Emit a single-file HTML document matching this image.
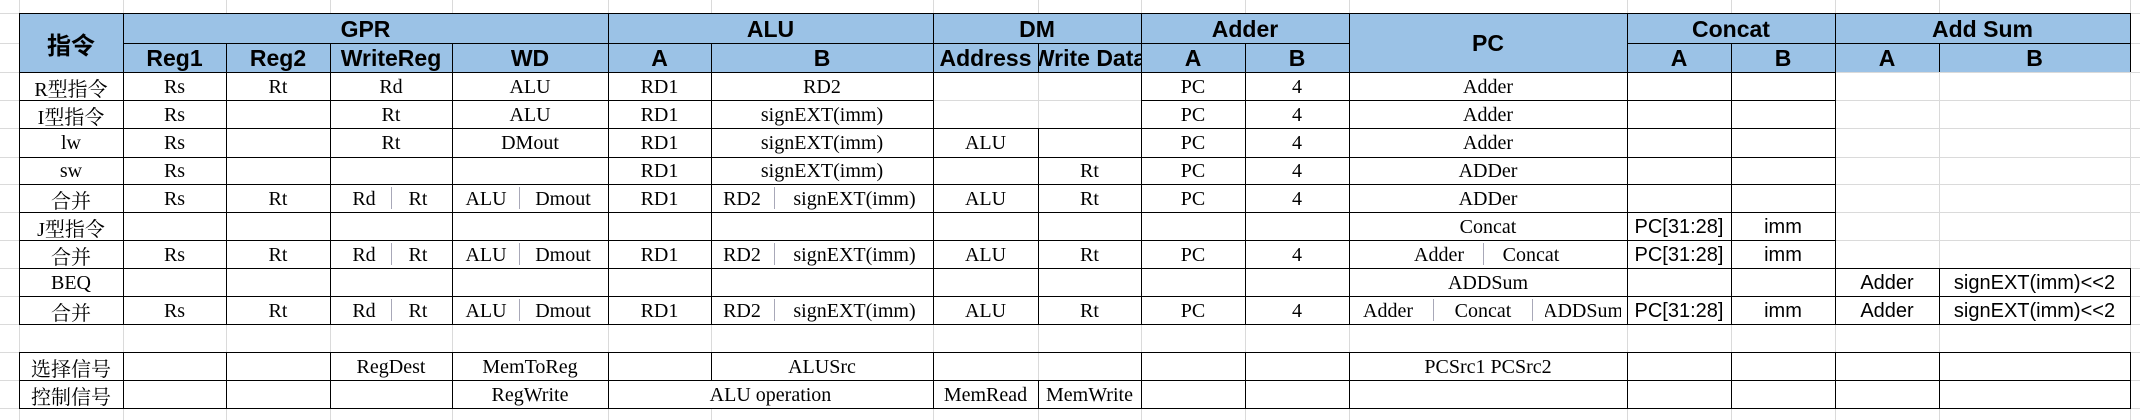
<!DOCTYPE html>
<html><head><meta charset="utf-8">
<style>
html,body{margin:0;padding:0;background:#fff;}
body{width:2140px;height:420px;position:relative;overflow:hidden;}
.gv{position:absolute;top:0;height:420px;width:1px;background:#dadada;}
.gh{position:absolute;left:0;width:2140px;height:1px;background:#dadada;}
.bh{position:absolute;height:1px;background:#000;}
.bv{position:absolute;width:1px;background:#000;}
.c{position:absolute;display:flex;align-items:center;justify-content:center;white-space:nowrap;overflow:hidden;
 font-family:"Liberation Serif","Noto Serif CJK SC",serif;font-size:20px;color:#000;padding-top:2px;box-sizing:border-box;}
.h{font-family:"Liberation Sans","Noto Sans CJK SC",sans-serif;font-weight:bold;font-size:23px;}
.s{font-family:"Liberation Sans",sans-serif;font-size:20px;}
.bar{position:absolute;width:1px;background:#a8a8b8;height:22px;}
</style></head><body>
<!-- gray grid -->
<div class="gh" style="top:13px"></div><div class="gh" style="top:43px"></div><div class="gh" style="top:72px"></div>
<div class="gh" style="top:100px"></div><div class="gh" style="top:128px"></div><div class="gh" style="top:157px"></div>
<div class="gh" style="top:184px"></div><div class="gh" style="top:212px"></div><div class="gh" style="top:240px"></div>
<div class="gh" style="top:268px"></div><div class="gh" style="top:296px"></div><div class="gh" style="top:324px"></div>
<div class="gh" style="top:352px"></div><div class="gh" style="top:380px"></div><div class="gh" style="top:408px"></div>
<div class="gv" style="left:19px"></div><div class="gv" style="left:123px"></div><div class="gv" style="left:226px"></div>
<div class="gv" style="left:330px"></div><div class="gv" style="left:452px"></div><div class="gv" style="left:608px"></div>
<div class="gv" style="left:711px"></div><div class="gv" style="left:933px"></div><div class="gv" style="left:1038px"></div>
<div class="gv" style="left:1141px"></div><div class="gv" style="left:1245px"></div><div class="gv" style="left:1349px"></div>
<div class="gv" style="left:1627px"></div><div class="gv" style="left:1731px"></div><div class="gv" style="left:1835px"></div>
<div class="gv" style="left:1939px"></div><div class="gv" style="left:2130px"></div>

<!-- merged white areas -->
<div style="position:absolute;left:1350px;top:73px;width:277px;height:251px;background:#fff"></div>
<div style="position:absolute;left:609px;top:381px;width:324px;height:27px;background:#fff"></div>

<!-- header bg -->
<div style="position:absolute;left:19px;top:13px;width:2111px;height:59px;background:#9bc2e6"></div>

<!-- black horizontals -->
<div class="bh" style="left:19px;width:2112px;top:13px"></div>
<div class="bh" style="left:123px;width:1226px;top:43px"></div>
<div class="bh" style="left:1627px;width:504px;top:43px"></div>
<div class="bh" style="left:19px;width:1817px;top:72px"></div>
<div class="bh" style="left:19px;width:914px;top:100px"></div>
<div class="bh" style="left:1141px;width:695px;top:100px"></div>
<div class="bh" style="left:19px;width:1817px;top:128px"></div>
<div class="bh" style="left:19px;width:1817px;top:157px"></div>
<div class="bh" style="left:19px;width:1817px;top:184px"></div>
<div class="bh" style="left:19px;width:1817px;top:212px"></div>
<div class="bh" style="left:19px;width:1817px;top:240px"></div>
<div class="bh" style="left:19px;width:2112px;top:268px"></div>
<div class="bh" style="left:19px;width:2112px;top:296px"></div>
<div class="bh" style="left:19px;width:2112px;top:324px"></div>
<div class="bh" style="left:19px;width:2112px;top:352px"></div>
<div class="bh" style="left:19px;width:2112px;top:380px"></div>
<div class="bh" style="left:19px;width:2112px;top:408px"></div>

<!-- black verticals -->
<div class="bv" style="left:19px;top:13px;height:311px"></div><div class="bv" style="left:19px;top:352px;height:56px"></div>
<div class="bv" style="left:123px;top:13px;height:311px"></div><div class="bv" style="left:123px;top:352px;height:56px"></div>
<div class="bv" style="left:226px;top:43px;height:281px"></div><div class="bv" style="left:226px;top:352px;height:56px"></div>
<div class="bv" style="left:330px;top:43px;height:281px"></div><div class="bv" style="left:330px;top:352px;height:56px"></div>
<div class="bv" style="left:452px;top:43px;height:281px"></div><div class="bv" style="left:452px;top:352px;height:56px"></div>
<div class="bv" style="left:608px;top:13px;height:311px"></div><div class="bv" style="left:608px;top:352px;height:56px"></div>
<div class="bv" style="left:711px;top:43px;height:281px"></div><div class="bv" style="left:711px;top:352px;height:28px"></div>
<div class="bv" style="left:933px;top:13px;height:311px"></div><div class="bv" style="left:933px;top:352px;height:56px"></div>
<div class="bv" style="left:1038px;top:43px;height:29px"></div><div class="bv" style="left:1038px;top:128px;height:196px"></div><div class="bv" style="left:1038px;top:380px;height:28px"></div>
<div class="bv" style="left:1141px;top:13px;height:311px"></div><div class="bv" style="left:1141px;top:352px;height:56px"></div>
<div class="bv" style="left:1245px;top:43px;height:281px"></div><div class="bv" style="left:1245px;top:352px;height:56px"></div>
<div class="bv" style="left:1349px;top:13px;height:311px"></div><div class="bv" style="left:1349px;top:352px;height:56px"></div>
<div class="bv" style="left:1627px;top:13px;height:311px"></div><div class="bv" style="left:1627px;top:352px;height:56px"></div>
<div class="bv" style="left:1731px;top:43px;height:281px"></div><div class="bv" style="left:1731px;top:352px;height:56px"></div>
<div class="bv" style="left:1835px;top:13px;height:311px"></div><div class="bv" style="left:1835px;top:352px;height:56px"></div>
<div class="bv" style="left:1939px;top:43px;height:29px"></div><div class="bv" style="left:1939px;top:268px;height:56px"></div><div class="bv" style="left:1939px;top:352px;height:56px"></div>
<div class="bv" style="left:2130px;top:13px;height:59px"></div><div class="bv" style="left:2130px;top:268px;height:56px"></div><div class="bv" style="left:2130px;top:352px;height:56px"></div>

<!-- header text -->
<div class="c h" style="left:19px;top:13px;width:104px;height:59px;font-size:24px">指令</div>
<div class="c h" style="left:123px;top:13px;width:485px;height:30px">GPR</div>
<div class="c h" style="left:608px;top:13px;width:325px;height:30px">ALU</div>
<div class="c h" style="left:933px;top:13px;width:208px;height:30px">DM</div>
<div class="c h" style="left:1141px;top:13px;width:208px;height:30px">Adder</div>
<div class="c h" style="left:1349px;top:13px;width:278px;height:59px">PC</div>
<div class="c h" style="left:1627px;top:13px;width:208px;height:30px">Concat</div>
<div class="c h" style="left:1835px;top:13px;width:295px;height:30px">Add Sum</div>
<div class="c h" style="left:123px;top:43px;width:103px;height:29px">Reg1</div>
<div class="c h" style="left:226px;top:43px;width:104px;height:29px">Reg2</div>
<div class="c h" style="left:330px;top:43px;width:122px;height:29px">WriteReg</div>
<div class="c h" style="left:452px;top:43px;width:156px;height:29px">WD</div>
<div class="c h" style="left:608px;top:43px;width:103px;height:29px">A</div>
<div class="c h" style="left:711px;top:43px;width:222px;height:29px">B</div>
<div class="c h" style="left:933px;top:43px;width:105px;height:29px">Address</div>
<div class="c h" style="left:1038px;top:43px;width:103px;height:29px">Write Data</div>
<div class="c h" style="left:1141px;top:43px;width:104px;height:29px">A</div>
<div class="c h" style="left:1245px;top:43px;width:104px;height:29px">B</div>
<div class="c h" style="left:1627px;top:43px;width:104px;height:29px">A</div>
<div class="c h" style="left:1731px;top:43px;width:104px;height:29px">B</div>
<div class="c h" style="left:1835px;top:43px;width:104px;height:29px">A</div>
<div class="c h" style="left:1939px;top:43px;width:191px;height:29px">B</div>

<!-- Row R 72 -->
<div class="c" style="left:19px;top:72px;width:104px;height:28px">R型指令</div>
<div class="c" style="left:123px;top:72px;width:103px;height:28px">Rs</div>
<div class="c" style="left:226px;top:72px;width:104px;height:28px">Rt</div>
<div class="c" style="left:330px;top:72px;width:122px;height:28px">Rd</div>
<div class="c" style="left:452px;top:72px;width:156px;height:28px">ALU</div>
<div class="c" style="left:608px;top:72px;width:103px;height:28px">RD1</div>
<div class="c" style="left:711px;top:72px;width:222px;height:28px">RD2</div>
<div class="c" style="left:1141px;top:72px;width:104px;height:28px">PC</div>
<div class="c" style="left:1245px;top:72px;width:104px;height:28px">4</div>
<div class="c" style="left:1349px;top:72px;width:278px;height:28px">Adder</div>
<!-- Row I 100 -->
<div class="c" style="left:19px;top:100px;width:104px;height:28px">I型指令</div>
<div class="c" style="left:123px;top:100px;width:103px;height:28px">Rs</div>
<div class="c" style="left:330px;top:100px;width:122px;height:28px">Rt</div>
<div class="c" style="left:452px;top:100px;width:156px;height:28px">ALU</div>
<div class="c" style="left:608px;top:100px;width:103px;height:28px">RD1</div>
<div class="c" style="left:711px;top:100px;width:222px;height:28px">signEXT(imm)</div>
<div class="c" style="left:1141px;top:100px;width:104px;height:28px">PC</div>
<div class="c" style="left:1245px;top:100px;width:104px;height:28px">4</div>
<div class="c" style="left:1349px;top:100px;width:278px;height:28px">Adder</div>
<!-- lw 128 -->
<div class="c" style="left:19px;top:128px;width:104px;height:29px">lw</div>
<div class="c" style="left:123px;top:128px;width:103px;height:29px">Rs</div>
<div class="c" style="left:330px;top:128px;width:122px;height:29px">Rt</div>
<div class="c" style="left:452px;top:128px;width:156px;height:29px">DMout</div>
<div class="c" style="left:608px;top:128px;width:103px;height:29px">RD1</div>
<div class="c" style="left:711px;top:128px;width:222px;height:29px">signEXT(imm)</div>
<div class="c" style="left:933px;top:128px;width:105px;height:29px">ALU</div>
<div class="c" style="left:1141px;top:128px;width:104px;height:29px">PC</div>
<div class="c" style="left:1245px;top:128px;width:104px;height:29px">4</div>
<div class="c" style="left:1349px;top:128px;width:278px;height:29px">Adder</div>
<!-- sw 157 -->
<div class="c" style="left:19px;top:157px;width:104px;height:27px">sw</div>
<div class="c" style="left:123px;top:157px;width:103px;height:27px">Rs</div>
<div class="c" style="left:608px;top:157px;width:103px;height:27px">RD1</div>
<div class="c" style="left:711px;top:157px;width:222px;height:27px">signEXT(imm)</div>
<div class="c" style="left:1038px;top:157px;width:103px;height:27px">Rt</div>
<div class="c" style="left:1141px;top:157px;width:104px;height:27px">PC</div>
<div class="c" style="left:1245px;top:157px;width:104px;height:27px">4</div>
<div class="c" style="left:1349px;top:157px;width:278px;height:27px">ADDer</div>
<!-- 合并 184 -->
<div class="c" style="left:19px;top:184px;width:104px;height:28px">合并</div>
<div class="c" style="left:123px;top:184px;width:103px;height:28px">Rs</div>
<div class="c" style="left:226px;top:184px;width:104px;height:28px">Rt</div>
<div class="c" style="left:344px;top:184px;width:40px;height:28px">Rd</div><div class="bar" style="left:391px;top:187px"></div>
<div class="c" style="left:398px;top:184px;width:40px;height:28px">Rt</div>
<div class="c" style="left:462px;top:184px;width:48px;height:28px">ALU</div><div class="bar" style="left:519px;top:187px"></div>
<div class="c" style="left:528px;top:184px;width:70px;height:28px">Dmout</div>
<div class="c" style="left:608px;top:184px;width:103px;height:28px">RD1</div>
<div class="c" style="left:718px;top:184px;width:48px;height:28px">RD2</div><div class="bar" style="left:774px;top:187px"></div>
<div class="c" style="left:782px;top:184px;width:145px;height:28px">signEXT(imm)</div>
<div class="c" style="left:933px;top:184px;width:105px;height:28px">ALU</div>
<div class="c" style="left:1038px;top:184px;width:103px;height:28px">Rt</div>
<div class="c" style="left:1141px;top:184px;width:104px;height:28px">PC</div>
<div class="c" style="left:1245px;top:184px;width:104px;height:28px">4</div>
<div class="c" style="left:1349px;top:184px;width:278px;height:28px">ADDer</div>
<!-- J 212 -->
<div class="c" style="left:19px;top:212px;width:104px;height:28px">J型指令</div>
<div class="c" style="left:1349px;top:212px;width:278px;height:28px">Concat</div>
<div class="c s" style="left:1627px;top:212px;width:104px;height:28px">PC[31:28]</div>
<div class="c s" style="left:1731px;top:212px;width:104px;height:28px">imm</div>
<!-- 合并 240 -->
<div class="c" style="left:19px;top:240px;width:104px;height:28px">合并</div>
<div class="c" style="left:123px;top:240px;width:103px;height:28px">Rs</div>
<div class="c" style="left:226px;top:240px;width:104px;height:28px">Rt</div>
<div class="c" style="left:344px;top:240px;width:40px;height:28px">Rd</div><div class="bar" style="left:391px;top:243px"></div>
<div class="c" style="left:398px;top:240px;width:40px;height:28px">Rt</div>
<div class="c" style="left:462px;top:240px;width:48px;height:28px">ALU</div><div class="bar" style="left:519px;top:243px"></div>
<div class="c" style="left:528px;top:240px;width:70px;height:28px">Dmout</div>
<div class="c" style="left:608px;top:240px;width:103px;height:28px">RD1</div>
<div class="c" style="left:718px;top:240px;width:48px;height:28px">RD2</div><div class="bar" style="left:774px;top:243px"></div>
<div class="c" style="left:782px;top:240px;width:145px;height:28px">signEXT(imm)</div>
<div class="c" style="left:933px;top:240px;width:105px;height:28px">ALU</div>
<div class="c" style="left:1038px;top:240px;width:103px;height:28px">Rt</div>
<div class="c" style="left:1141px;top:240px;width:104px;height:28px">PC</div>
<div class="c" style="left:1245px;top:240px;width:104px;height:28px">4</div>
<div class="c" style="left:1408px;top:240px;width:62px;height:28px">Adder</div><div class="bar" style="left:1483px;top:243px"></div>
<div class="c" style="left:1496px;top:240px;width:70px;height:28px">Concat</div>
<div class="c s" style="left:1627px;top:240px;width:104px;height:28px">PC[31:28]</div>
<div class="c s" style="left:1731px;top:240px;width:104px;height:28px">imm</div>
<!-- BEQ 268 -->
<div class="c" style="left:19px;top:268px;width:104px;height:28px">BEQ</div>
<div class="c" style="left:1349px;top:268px;width:278px;height:28px">ADDSum</div>
<div class="c s" style="left:1835px;top:268px;width:104px;height:28px">Adder</div>
<div class="c s" style="left:1939px;top:268px;width:191px;height:28px">signEXT(imm)&lt;&lt;2</div>
<!-- 合并 296 -->
<div class="c" style="left:19px;top:296px;width:104px;height:28px">合并</div>
<div class="c" style="left:123px;top:296px;width:103px;height:28px">Rs</div>
<div class="c" style="left:226px;top:296px;width:104px;height:28px">Rt</div>
<div class="c" style="left:344px;top:296px;width:40px;height:28px">Rd</div><div class="bar" style="left:391px;top:299px"></div>
<div class="c" style="left:398px;top:296px;width:40px;height:28px">Rt</div>
<div class="c" style="left:462px;top:296px;width:48px;height:28px">ALU</div><div class="bar" style="left:519px;top:299px"></div>
<div class="c" style="left:528px;top:296px;width:70px;height:28px">Dmout</div>
<div class="c" style="left:608px;top:296px;width:103px;height:28px">RD1</div>
<div class="c" style="left:718px;top:296px;width:48px;height:28px">RD2</div><div class="bar" style="left:774px;top:299px"></div>
<div class="c" style="left:782px;top:296px;width:145px;height:28px">signEXT(imm)</div>
<div class="c" style="left:933px;top:296px;width:105px;height:28px">ALU</div>
<div class="c" style="left:1038px;top:296px;width:103px;height:28px">Rt</div>
<div class="c" style="left:1141px;top:296px;width:104px;height:28px">PC</div>
<div class="c" style="left:1245px;top:296px;width:104px;height:28px">4</div>
<div class="c" style="left:1356px;top:296px;width:64px;height:28px">Adder</div><div class="bar" style="left:1433px;top:299px"></div>
<div class="c" style="left:1448px;top:296px;width:70px;height:28px">Concat</div><div class="bar" style="left:1532px;top:299px"></div>
<div class="c" style="left:1545px;top:296px;width:76px;height:28px">ADDSum</div>
<div class="c s" style="left:1627px;top:296px;width:104px;height:28px">PC[31:28]</div>
<div class="c s" style="left:1731px;top:296px;width:104px;height:28px">imm</div>
<div class="c s" style="left:1835px;top:296px;width:104px;height:28px">Adder</div>
<div class="c s" style="left:1939px;top:296px;width:191px;height:28px">signEXT(imm)&lt;&lt;2</div>
<!-- 选择 352 -->
<div class="c" style="left:19px;top:352px;width:104px;height:28px">选择信号</div>
<div class="c" style="left:330px;top:352px;width:122px;height:28px">RegDest</div>
<div class="c" style="left:452px;top:352px;width:156px;height:28px">MemToReg</div>
<div class="c" style="left:711px;top:352px;width:222px;height:28px">ALUSrc</div>
<div class="c" style="left:1349px;top:352px;width:278px;height:28px">PCSrc1 PCSrc2</div>
<!-- 控制 380 -->
<div class="c" style="left:19px;top:380px;width:104px;height:28px">控制信号</div>
<div class="c" style="left:452px;top:380px;width:156px;height:28px">RegWrite</div>
<div class="c" style="left:608px;top:380px;width:325px;height:28px">ALU operation</div>
<div class="c" style="left:933px;top:380px;width:105px;height:28px">MemRead</div>
<div class="c" style="left:1038px;top:380px;width:103px;height:28px">MemWrite</div>
</body></html>
